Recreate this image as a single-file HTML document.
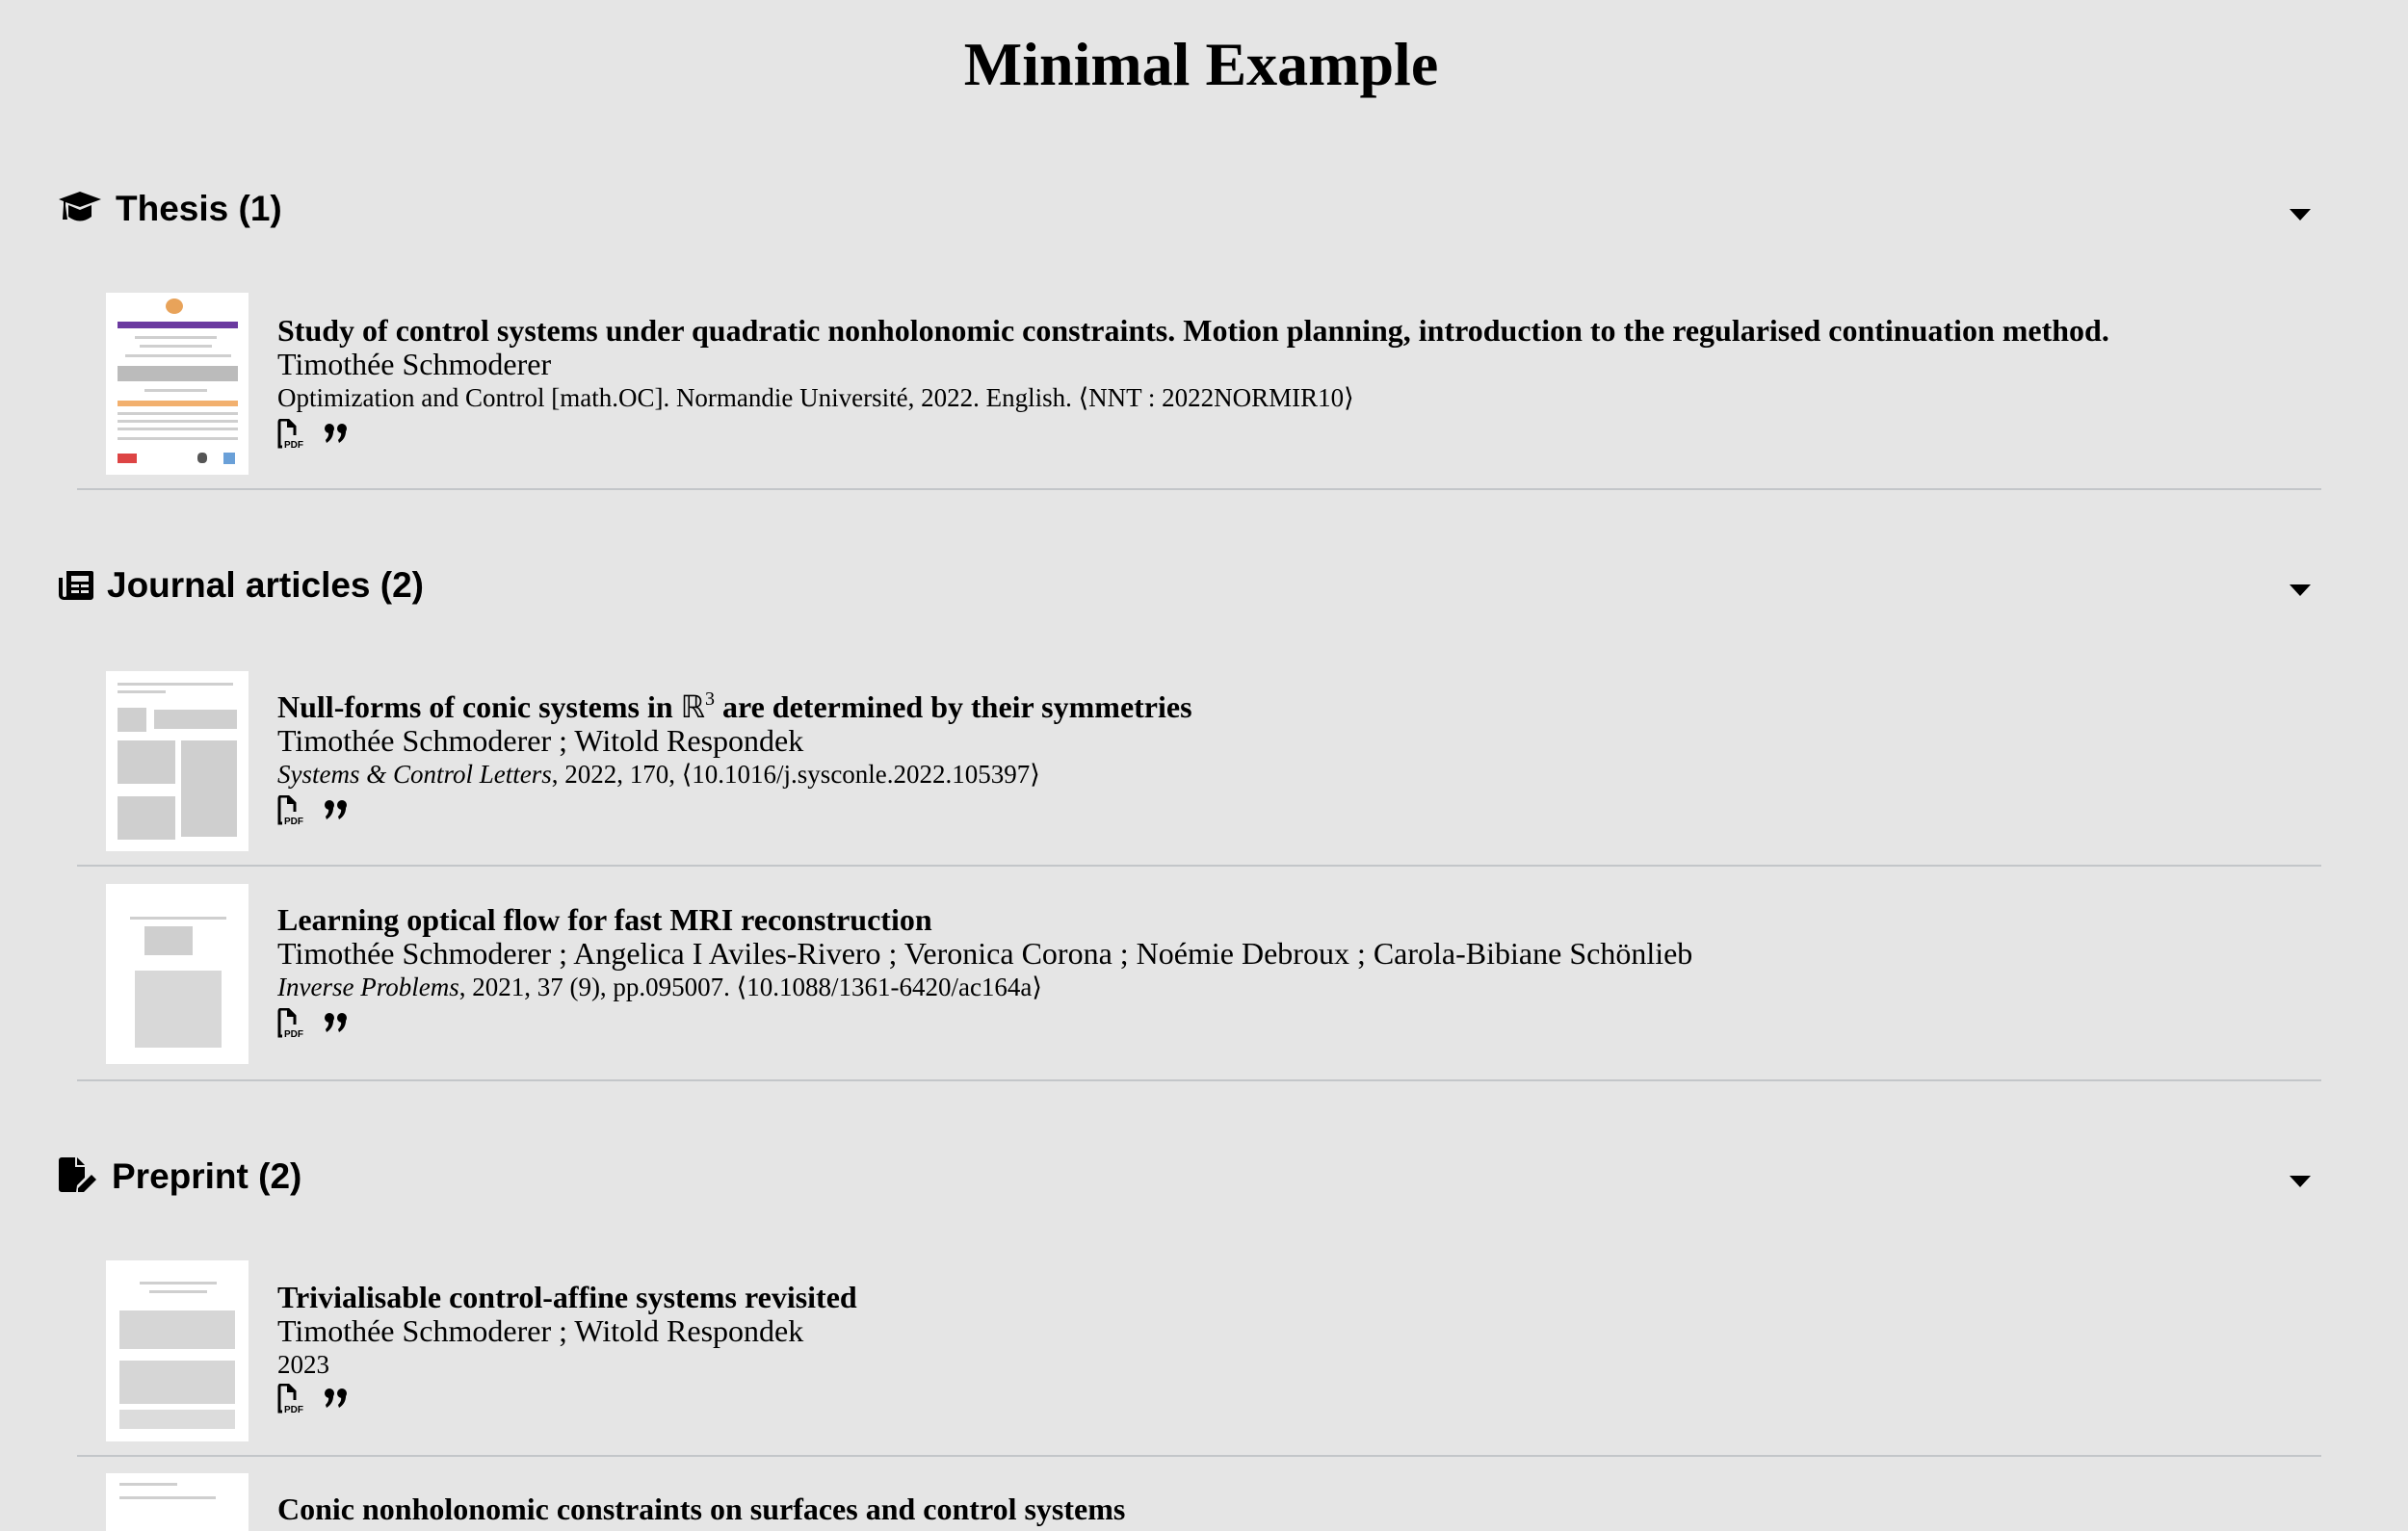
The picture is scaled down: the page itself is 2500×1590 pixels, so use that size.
<!DOCTYPE html>
<html><head><meta charset="utf-8"><style>
body{margin:0;width:2500px;height:1578px;overflow:hidden;background:#e5e5e5;position:relative;font-family:"Liberation Serif",serif;color:#000}
.a{position:absolute;white-space:nowrap}
h1{position:absolute;left:0;width:2494px;top:22px;margin:0;text-align:center;font:bold 64px/90px "Liberation Serif",serif}
.hd{font:bold 37px/44px "Liberation Sans",sans-serif}
.t{font-weight:bold;font-size:32px;line-height:37px}
.t sup{line-height:0;font-size:20px;vertical-align:0;position:relative;top:-13px}
.au{font-size:32px;line-height:37px}
.m{font-size:27px;line-height:33px}
.sep{position:absolute;left:80px;width:2330px;height:2px;background:#c3c6c9}
.th{position:absolute;left:110px;width:148px;background:#fff;overflow:hidden}
.ln{position:absolute;height:3px;background:#cfcfcf}
.caret{position:absolute;left:2377px;width:0;height:0;border-left:11px solid transparent;border-right:11px solid transparent;border-top:12px solid #000}
</style></head><body>
<h1>Minimal Example</h1>

<svg class="a" style="left:60px;top:198px" width="46" height="36" viewBox="0 0 46 36"><path d="M23 1 L45 9 L23 17 L8 12 L8 16 L10 30 L5 30 L6 15 L6 11 L1 9 Z" fill="#000"/><path d="M11 15 L11 27 Q23 36 35 27 L35 15 L23 20 Z" fill="#000"/></svg>
<div class="a hd" style="left:120px;top:195px">Thesis (1)</div>
<div class="caret" style="top:217px"></div>

<div class="th" style="top:304px;height:189px">
<div style="position:absolute;left:62px;top:6px;width:18px;height:16px;border-radius:50%;background:#e8a35a"></div>
<div style="position:absolute;left:12px;top:30px;width:125px;height:7px;background:#6b3aa0"></div>
<div class="ln" style="left:30px;top:45px;width:85px"></div><div class="ln" style="left:35px;top:54px;width:75px"></div><div class="ln" style="left:20px;top:64px;width:110px"></div>
<div style="position:absolute;left:12px;top:76px;width:125px;height:16px;background:#bbb"></div>
<div class="ln" style="left:40px;top:100px;width:65px"></div>
<div style="position:absolute;left:12px;top:112px;width:125px;height:6px;background:#f2b06e"></div>
<div class="ln" style="left:12px;top:124px;width:125px"></div><div class="ln" style="left:12px;top:132px;width:125px"></div><div class="ln" style="left:12px;top:140px;width:125px"></div><div class="ln" style="left:12px;top:150px;width:125px"></div>
<div style="position:absolute;left:12px;top:167px;width:20px;height:10px;background:#d44"></div>
<div style="position:absolute;left:122px;top:166px;width:12px;height:12px;background:#6aa0d8"></div>
<div style="position:absolute;left:95px;top:166px;width:10px;height:11px;background:#555;border-radius:40%"></div>
</div>
<div class="a t" style="left:288px;top:325px">Study of control systems under quadratic nonholonomic constraints. Motion planning, introduction to the regularised continuation method.</div>
<div class="a au" style="left:288px;top:360px">Timothée Schmoderer</div>
<div class="a m" style="left:288px;top:397px">Optimization and Control [math.OC]. Normandie Université, 2022. English. ⟨NNT : 2022NORMIR10⟩</div>
<div class="ico" style="position:absolute;left:288px;top:435px"></div>
<div class="sep" style="top:507px"></div>

<svg class="a" style="left:60px;top:591px" width="38" height="33" viewBox="0 0 38 33"><path d="M9 2 H35 a2 2 0 0 1 2 2 V29 a3 3 0 0 1 -3 3 H6 a5 5 0 0 1 -5 -5 V9 H5 V27 a2 2 0 0 0 4 0 Z" fill="#000"/><rect x="14" y="7" width="18" height="6" fill="#e5e5e5"/><rect x="14" y="16" width="8" height="3" fill="#e5e5e5"/><rect x="24" y="16" width="8" height="3" fill="#e5e5e5"/><rect x="14" y="22" width="8" height="3" fill="#e5e5e5"/><rect x="24" y="22" width="8" height="3" fill="#e5e5e5"/></svg>
<div class="a hd" style="left:111px;top:586px">Journal articles (2)</div>
<div class="caret" style="top:607px"></div>

<div class="th" style="top:697px;height:187px">
<div class="ln" style="left:12px;top:12px;width:120px"></div><div class="ln" style="left:12px;top:20px;width:50px"></div>
<div class="ln" style="left:12px;top:38px;width:30px;height:25px"></div><div class="ln" style="left:50px;top:40px;width:86px;height:20px"></div>
<div class="ln" style="left:12px;top:72px;width:60px;height:45px"></div><div class="ln" style="left:78px;top:72px;width:58px;height:100px"></div>
<div class="ln" style="left:12px;top:130px;width:60px;height:45px"></div>
</div>
<div class="a t" style="left:288px;top:716px">Null-forms of conic systems in <span style="font-weight:normal">ℝ<sup>3</sup></span> are determined by their symmetries</div>
<div class="a au" style="left:288px;top:751px">Timothée Schmoderer ; Witold Respondek</div>
<div class="a m" style="left:288px;top:788px"><i>Systems &amp; Control Letters</i>, 2022, 170, ⟨10.1016/j.sysconle.2022.105397⟩</div>
<div class="ico" style="position:absolute;left:288px;top:826px"></div>
<div class="sep" style="top:898px"></div>

<div class="th" style="top:918px;height:187px">
<div class="ln" style="left:25px;top:34px;width:100px"></div>
<div class="ln" style="left:40px;top:44px;width:50px;height:30px"></div>
<div class="ln" style="left:30px;top:90px;width:90px;height:80px;background:#d8d8d8"></div>
</div>
<div class="a t" style="left:288px;top:937px">Learning optical flow for fast MRI reconstruction</div>
<div class="a au" style="left:288px;top:972px">Timothée Schmoderer ; Angelica I Aviles-Rivero ; Veronica Corona ; Noémie Debroux ; Carola-Bibiane Schönlieb</div>
<div class="a m" style="left:288px;top:1009px"><i>Inverse Problems</i>, 2021, 37 (9), pp.095007. ⟨10.1088/1361-6420/ac164a⟩</div>
<div class="ico" style="position:absolute;left:288px;top:1047px"></div>
<div class="sep" style="top:1121px"></div>

<svg class="a" style="left:60px;top:1201px" width="44" height="38" viewBox="0 0 44 38"><path d="M4 1 H18 V11 H28 V22 L20 30 L19 37 H4 a3 3 0 0 1 -3 -3 V4 a3 3 0 0 1 3 -3 Z M20 1 L28 9 H20 Z" fill="#000"/><path d="M35 19 L40 24 L27 37 L21 37 L21 33 Z" fill="#000"/></svg>
<div class="a hd" style="left:116px;top:1200px">Preprint (2)</div>
<div class="caret" style="top:1221px"></div>

<div class="th" style="top:1309px;height:188px">
<div class="ln" style="left:35px;top:22px;width:80px"></div><div class="ln" style="left:45px;top:31px;width:60px"></div>
<div class="ln" style="left:14px;top:52px;width:120px;height:40px;background:#d6d6d6"></div>
<div class="ln" style="left:14px;top:104px;width:120px;height:45px;background:#d6d6d6"></div>
<div class="ln" style="left:14px;top:155px;width:120px;height:20px;background:#dcdcdc"></div>
</div>
<div class="a t" style="left:288px;top:1329px">Trivialisable control-affine systems revisited</div>
<div class="a au" style="left:288px;top:1364px">Timothée Schmoderer ; Witold Respondek</div>
<div class="a m" style="left:288px;top:1401px">2023</div>
<div class="ico" style="position:absolute;left:288px;top:1437px"></div>
<div class="sep" style="top:1511px"></div>

<div class="th" style="top:1530px;height:60px">
<div class="ln" style="left:14px;top:10px;width:60px"></div><div class="ln" style="left:14px;top:24px;width:100px"></div>
</div>
<div class="a t" style="left:288px;top:1549px">Conic nonholonomic constraints on surfaces and control systems</div>

<script>
document.querySelectorAll('.ico').forEach(function(e){
e.innerHTML='<svg width="80" height="31" viewBox="0 0 80 31"><path d="M2 28 V3 a2 2 0 0 1 2 -2 H11 L18 8 V17" fill="none" stroke="#000" stroke-width="3"/><path d="M11 1 V8 H18" fill="#000" stroke="#000" stroke-width="2"/><path d="M2 26 V29 H5" fill="none" stroke="#000" stroke-width="3"/><text x="7" y="30" font-family="Liberation Sans,sans-serif" font-weight="bold" font-size="10">PDF</text><circle cx="54" cy="10" r="5" fill="#000"/><path d="M58 10 Q59 20 51 25 L50 22 Q54 18 53 14 Z" fill="#000"/><circle cx="67" cy="10" r="5" fill="#000"/><path d="M71 10 Q72 20 64 25 L63 22 Q67 18 66 14 Z" fill="#000"/></svg>';
});
</script>
</body></html>
